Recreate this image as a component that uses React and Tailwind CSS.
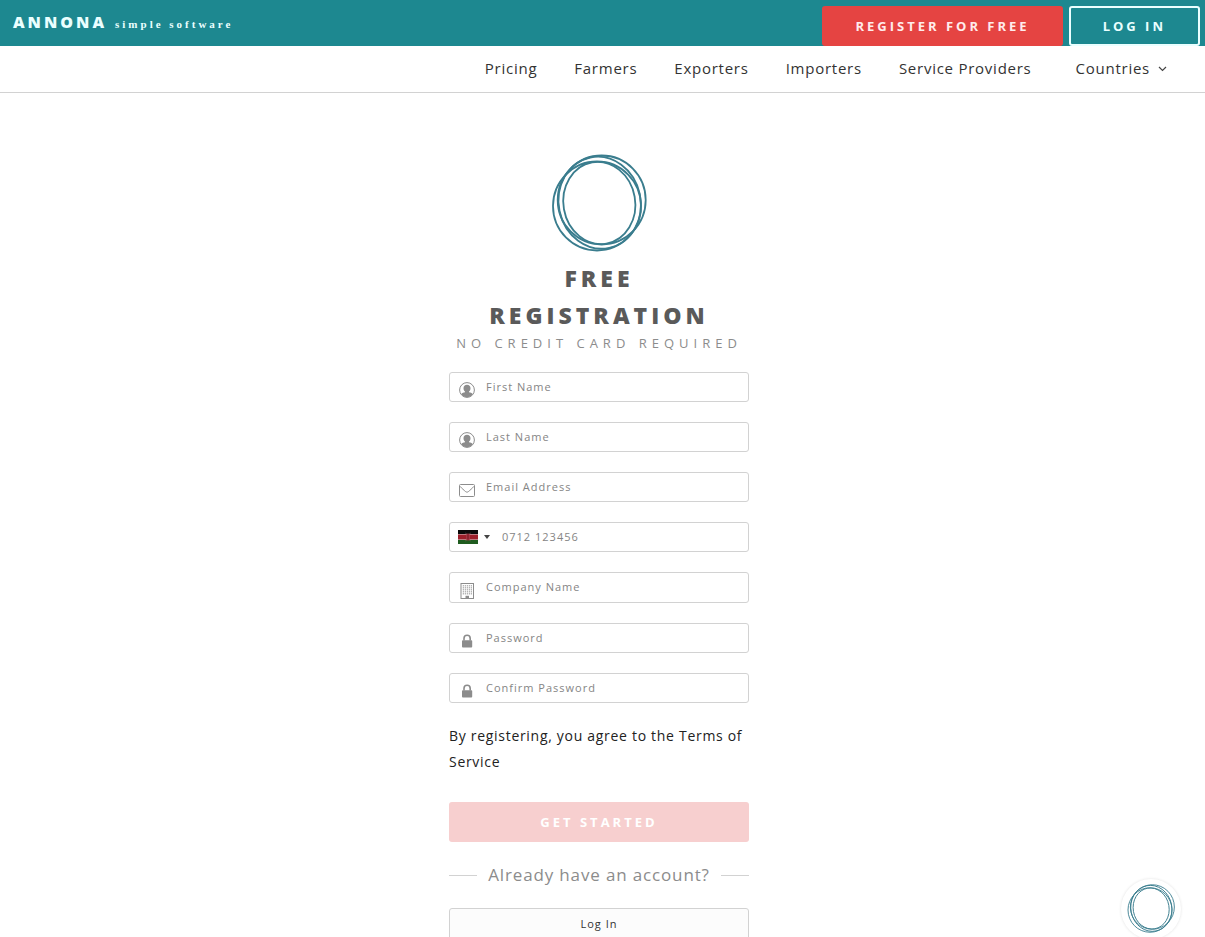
import React from "react";

const navLinks = ["Pricing", "Farmers", "Exporters", "Importers", "Service Providers"];

function Rings({ className }) {
  return (
    <svg viewBox="0 0 120 120" className={className} fill="none" stroke="#3a7d8e" strokeWidth="1.8" aria-hidden="true">
      <ellipse cx="58" cy="66" rx="44" ry="44.5" />
      <ellipse cx="62.7" cy="60" rx="44" ry="44.5" />
      <ellipse cx="60.7" cy="62.7" rx="41" ry="46.2" transform="rotate(-12 60.7 62.7)" />
      <ellipse cx="60.3" cy="63" rx="35.9" ry="41.2" transform="rotate(-10 60.3 63)" />
    </svg>
  );
}

function UserIcon() {
  return (
    <svg viewBox="0 0 16 16" className="size-4" aria-hidden="true">
      <circle cx="8" cy="8" r="7.4" fill="none" stroke="#8c8c8c" strokeWidth="1" />
      <path fill="#8c8c8c" d="M8 2.8c2.200 0 3.500 1.400 3.500 3.400 0 1.400-.6 2.600-1.500 3.200 0 .6.300.9 1.200 1.200 1 .3 1.900.6 2.500 1.300C12.400 14 10.300 15.200 8 15.200S3.600 14 2.300 11.900c.6-.7 1.500-1 2.500-1.300.9-.3 1.200-.6 1.200-1.200-.9-.6-1.500-1.800-1.500-3.200 0-2 1.300-3.400 3.500-3.400z" />
    </svg>
  );
}

function MailIcon() {
  return (
    <svg viewBox="0 0 16 16" className="size-4" fill="none" stroke="#8c8c8c" strokeWidth="1" strokeLinejoin="round" aria-hidden="true">
      <rect x="0.5" y="2.5" width="15" height="12" rx="1" />
      <path d="M.8 4.2C3 6.500 5 8.200 6.600 9.600c.9.7 1.900.7 2.800 0C11 8.200 13 6.500 15.200 4.200" />
    </svg>
  );
}

function BuildingIcon() {
  const rows = [2.5, 4.5, 6.5, 8.5, 10.5];
  const cols = [4, 6, 8, 10, 12];
  return (
    <svg viewBox="0 0 16 16" className="size-4" aria-hidden="true">
      <rect x="2" y="0.5" width="12.5" height="15" fill="none" stroke="#8c8c8c" />
      {rows.map((y) => cols.map((x) => <rect key={x + "-" + y} x={x - 0.2} y={y - 0.3} width="1" height="1.2" fill="#8c8c8c" />))}
      <path fill="#8c8c8c" d="M6.500 12.800h3.500V15.500H6.500z" />
    </svg>
  );
}

function LockIcon() {
  return (
    <svg viewBox="0 0 16 16" className="size-4" aria-hidden="true">
      <rect x="3" y="7.2" width="10.2" height="7.3" rx="0.9" fill="#8c8c8c" />
      <path d="M5 7.500V5.400a3.100 3.100 0 0 1 6.200 0v2.100" fill="none" stroke="#8c8c8c" strokeWidth="1.6" />
    </svg>
  );
}

function KenyaFlag() {
  return (
    <svg viewBox="0 0 20 14" className="h-3.5 w-5" aria-hidden="true">
      <rect width="20" height="14" fill="#0a0a0a" />
      <rect y="4" width="20" height="6" fill="#c9a3a6" />
      <rect y="4.7" width="20" height="4.6" fill="#9c1f2b" />
      <rect y="10" width="20" height="4" fill="#1f5c1f" />
      <path d="M7.700 2.800l4.600 8.400M12.300 2.800L7.700 11.200" stroke="#9b6468" strokeWidth="0.6" />
      <ellipse cx="10" cy="7" rx="2" ry="3.6" fill="#a83442" />
      <path d="M10 4.500v5" stroke="#5c1018" strokeWidth="0.8" />
    </svg>
  );
}

function Field({ id, label, type = "text", icon, tall }) {
  return (
    <div className={"flex rounded-[3px] border border-[#d2d2d2] bg-white pl-[9px] " + (tall ? "h-[31px]" : "h-[30px]")}>
      <label htmlFor={id} className="flex items-end pb-[3px]" aria-label={label}>
        {icon}
      </label>
      <input
        id={id}
        type={type}
        placeholder={label}
        className="min-w-0 flex-1 bg-transparent pr-2 pl-[11px] text-[11px] tracking-[1px] text-[#555] outline-none placeholder:text-[#858585]"
      />
    </div>
  );
}

export default function App() {
  return (
    <div className="min-h-screen bg-white font-['Open_Sans',sans-serif] text-[#333]">
      <header>
        <div className="flex h-[46px] items-start justify-between bg-[#1d8890] pt-[6px] pr-[5px] pl-[13px]">
          <a href="#home" className="flex items-baseline gap-2 pt-[4px] text-[#eaffff]">
            <span className="text-[16px] leading-6 font-extrabold tracking-[3px]">ANNONA</span>
            <span className="font-['Liberation_Serif',serif] text-[11px] font-bold tracking-[3px]">simple software</span>
          </a>
          <div className="flex gap-[6px]">
            <a href="#register" className="flex h-10 items-center rounded-[3px] bg-[#e54442] px-[33px] pt-0.5 text-[13px] font-bold tracking-[3px] text-[#ffecec]">
              REGISTER FOR FREE
            </a>
            <a href="#login" className="flex h-10 items-center rounded-[3px] border-2 border-[#eaffff] px-8 pt-0.5 text-[13px] font-bold tracking-[3px] text-[#eaffff]">
              LOG IN
            </a>
          </div>
        </div>
        <nav className="flex h-[47px] items-center justify-end gap-[37px] border-b border-[#d2d2d2] pr-[38px] pb-0.5 text-[15px] leading-5 tracking-wider">
          {navLinks.map((item) => (
            <a key={item} href={"#" + item.toLowerCase().replace(" ", "-")}>
              {item}
            </a>
          ))}
          <button type="button" className="ml-[7px] flex items-center gap-2 tracking-wider">
            Countries
            <svg viewBox="0 0 9 8" className="h-2 w-[9px]" fill="none" stroke="#444" strokeWidth="1.2" aria-hidden="true">
              <path d="M1 3l3.500 3.500L8 3" />
            </svg>
          </button>
        </nav>
      </header>

      <main className="pr-[7px]">
        <form className="mx-auto flex w-[300px] flex-col pt-[47px] pb-8" onSubmit={(e) => e.preventDefault()}>
          <Rings className="size-[120px] self-center" />
          <h1 className="text-center text-[23px] leading-[37px] font-extrabold tracking-[4px] text-[#5a5a5a]">
            FREE
            <br />
            REGISTRATION
          </h1>
          <p className="text-center text-[13px] leading-[18px] tracking-[5px] whitespace-nowrap text-[#8c8c8c]">NO CREDIT CARD REQUIRED</p>

          <div className="mt-5 flex flex-col gap-5">
            <Field id="first" label="First Name" icon={<UserIcon />} />
            <Field id="last" label="Last Name" icon={<UserIcon />} />
            <Field id="email" type="email" label="Email Address" icon={<MailIcon />} />
            <div className="flex h-[30px] items-center rounded-[3px] border border-[#d2d2d2] bg-white pl-2">
              <button type="button" aria-label="Country code: Kenya" className="flex items-center gap-1.5">
                <KenyaFlag />
                <svg viewBox="0 0 6 4" className="h-1 w-1.5" aria-hidden="true">
                  <path d="M0 0h6L3 4z" fill="#444" />
                </svg>
              </button>
              <input
                type="tel"
                aria-label="Phone number"
                placeholder="0712 123456"
                className="min-w-0 flex-1 bg-transparent pr-2 pl-3 text-[11px] tracking-[1px] text-[#555] outline-none placeholder:text-[#858585]"
              />
            </div>
            <Field id="company" label="Company Name" icon={<BuildingIcon />} tall />
            <Field id="password" type="password" label="Password" icon={<LockIcon />} />
            <Field id="confirm" type="password" label="Confirm Password" icon={<LockIcon />} />
          </div>

          <p className="mt-5 text-[14px] leading-[26px] tracking-wider text-[#222]">
            By registering, you agree to the <a href="#terms">Terms of Service</a>
          </p>

          <button type="submit" className="mt-[27px] h-10 rounded-[3px] bg-[#f7cfcf] pt-0.5 text-[13px] font-bold tracking-[3px] text-white">
            GET STARTED
          </button>

          <div className="mt-5 flex items-center gap-[11px] text-[17px] leading-[26px] tracking-wider whitespace-nowrap text-[#8c8c8c]">
            <span className="h-px flex-1 bg-[#d2d2d2]" />
            Already have an account?
            <span className="h-px flex-1 bg-[#d2d2d2]" />
          </div>

          <a href="#login" className="mt-5 flex h-8 items-center justify-center rounded-[3px] border border-[#d2d2d2] bg-[#fcfcfc] text-[11px] tracking-[1px]">
            Log In
          </a>
        </form>
      </main>

      <button
        type="button"
        aria-label="Open chat"
        className="fixed right-6 -bottom-0.5 flex size-[60px] items-center justify-center rounded-full bg-white pb-1 shadow-[0_0_3px_rgba(0,0,0,0.12)]"
      >
        <Rings className="size-[60px] shrink-0" />
      </button>
    </div>
  );
}
